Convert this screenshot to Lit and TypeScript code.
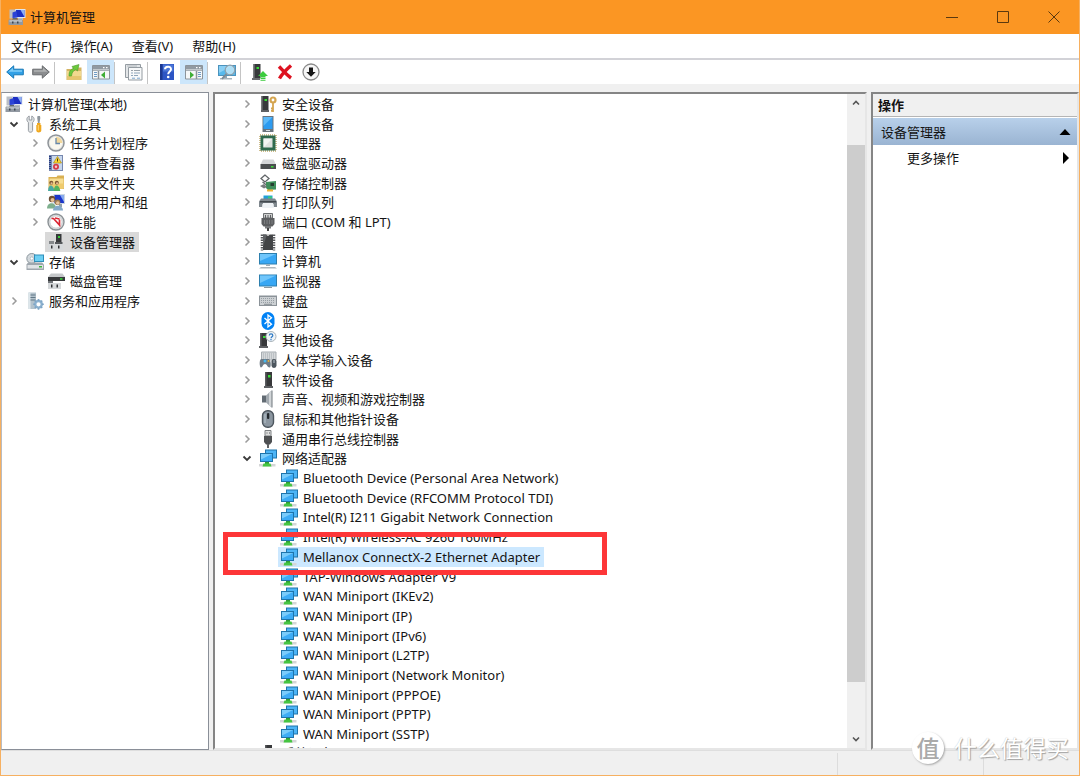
import { LitElement, html, svg, css, nothing } from "lit";
import type { SVGTemplateResult } from "lit";
import { customElement, property, state } from "lit/decorators.js";
import { classMap } from "lit/directives/class-map.js";

const pc = svg`
  <path d="M7 1h10.500v9H7z" fill="#dfe6ef"/><path d="M8 2h8.500v7H8z" fill="#1c2fc4"/><path d="M12.500 2h4v7z" fill="#8fb0f2"/>
  <path d="M1.500 1.500h6v9h-6z" fill="#b9bec6"/><path d="M4.500 4.500l4-1.500 1 6.500-5 .5z" fill="#2b43d6"/><path d="M10 10h5v2h-5z" fill="#b4bac2"/>
  <path d="M1 11.500h13l1 1v4.500H.500v-4.500z" fill="#9299a2"/><path d="M1.500 12.500h12.500v1H1.500z" fill="#d9dde2"/><path d="M4 11.500l1-1.500h4l1 1.500z" fill="#5d6670"/><path d="M4 13.500h1.500v2H4zM9 13.500h1.500v2H9z" fill="#3f4851"/>`;

const network = svg`
  <path d="M6 .5h12v9H6z" fill="#1f74ab"/><path d="M7 1.500h10v7H7z" fill="#4cb4f6"/>
  <path d="M1 4h13v9H1z" fill="#1f74ab"/><path d="M2 5h11v7H2z" fill="#3eacf6"/><path d="M2 5h11L2 10.500z" fill="#7accfb"/>
  <path d="M0 15h16.500v2.500H0z" fill="#d5d6d7"/><path d="M6 13h4v2H6z" fill="#2f9e35"/><path d="M4.500 14.500h7l1 3h-9z" fill="#45c541"/>`;

const consoleWindow = (flip: boolean) => svg`
  <path d="M.5 2.500h17v13.500H.500z" fill="#f5f7f8" stroke="#8c949b"/><path d="M1 3h16v3.500H1z" fill="#919aa2"/>
  <path d="M11 4h1.500v1.200H11zM14 4h1.500v1.200H14z" fill="#fff"/><path d="M1 7.500h16" stroke="#aab1b7"/>
  <path d=${flip ? "M11.500 8v8" : "M6.500 8v8"} stroke="#8c949b" stroke-width="1.500"/>
  <path d=${flip ? "M13 9.500h3M13 11.500h3M13 13.500h3" : "M2 9.500h3M2 11.500h3M2 13.500h3"} stroke="#6d9ac4"/>
  <path d=${flip ? "M5 8.500l4 3.500-4 3.500z" : "M13 8.500L9 12l4 3.500z"} fill="#3fae36"/>`;

const server = svg`
  <path d="M6 1h7v14H6z" fill="#38393b"/><path d="M6 1h1.500v14H6z" fill="#5b5d60"/><path d="M9 4h2.500v2.500H9z" fill="#37df36"/><path d="M5 15h9v2H5z" fill="#5f6164"/>`;

const ICONS: Record<string, SVGTemplateResult> = {
  pc,
  network,
  panelLeft: consoleWindow(false),
  panelRight: consoleWindow(true),
  server,
  back: svg`<path d="M.7 9l7-6.200v3.400h9.600v5.600H7.700v3.400z" fill="#31a0e6" stroke="#1879b7"/><path d="M2.500 8.700L7 4.800v2.400h9v1.500z" fill="#80cdf7"/>`,
  forward: svg`<path d="M17.300 9l-7-6.200v3.400H.7v5.600h9.600v3.400z" fill="#8b8d8f" stroke="#696c6e"/><path d="M15.500 8.700L11 4.800v2.400H2v1.500z" fill="#b1b3b4"/>`,
  folderUp: svg`<path d="M1.500 6H7l1.500-1.500h8V17h-15z" fill="#d3b362"/><path d="M2 8h14v8.500H2z" fill="#f1d98f"/><path d="M2 13h14v3.500H2z" fill="#e6c670"/><path d="M4 13c0-5 1.500-6.500 4.500-7.500L7 3.500 14 1.500 12.500 8l-1.800-1.500C8 8 7 9.500 6.500 13z" fill="#6bc93c" stroke="#4d9a2c" stroke-width=".6"/>`,
  props: svg`<path d="M.5 1.500h15v13H.500z" fill="#e3e6e8" stroke="#959ca2"/><path d="M3.500 4.500H17V17H3.500z" fill="#f8f9fa" stroke="#959ca2"/><path d="M2 3h10" stroke="#b3b9be"/><path d="M6 7.500h2M9 7.500h6" stroke="#9aa3ab"/><path d="M6 10h2M9 10h6M6 12.500h2M9 12.500h4" stroke="#8fa6ba"/><path d="M7 15.200h3M12 15.200h3" stroke="#7aa5cd"/>`,
  help: svg`<path d="M2 1h14v16H2z" fill="#2d55c4"/><path d="M2 1h2.500v16H2z" fill="#1c3890"/><path d="M5 1.500h10.500v7H5z" fill="#4a74d6"/><path d="M7 6.200c0-3.200 6-3.500 6 0 0 2.300-2.800 2.300-2.800 5" fill="none" stroke="#fff" stroke-width="2"/><circle cx="10.200" cy="14" r="1.300" fill="#fff"/>`,
  scan: svg`<path d="M0 2h18v11H0z" fill="#4b93bd"/><path d="M1 3h16v9H1z" fill="#56b9ec"/><path d="M1 3h13L1 10z" fill="#8ad0f5"/><path d="M5 13h4v2H5z" fill="#92a5b2"/><path d="M2 15h12v1.500H2z" fill="#a8b4bc"/><circle cx="12" cy="7" r="4.800" fill="#b9e3f7" fill-opacity=".9" stroke="#8fa0ab" stroke-width="1.200"/><path d="M8.500 10.800l-4.500 5" stroke="#7d8b95" stroke-width="1.800"/>`,
  update: svg`<path d="M3.500 1h7v14h-7z" fill="#37393b"/><path d="M3.500 1H5v14H3.500z" fill="#606264"/><path d="M6.500 4h2.500v2H6.500z" fill="#37df36"/><path d="M2 15h8v2H2z" fill="#6b6d70"/><path d="M13 8l5 5h-2.500v1.500h-5V13H8z" fill="#3ccc3f"/><path d="M10.500 15.500h5M10.500 17.300h5" stroke="#3ccc3f" stroke-width="1.100"/>`,
  remove: svg`<path d="M3 3.500c3 3 7 8 12 11.500M15 2.500C11 6 6 11 3.500 15.500" fill="none" stroke="#dd1220" stroke-width="3.400"/>`,
  disable: svg`<circle cx="9" cy="9" r="8" fill="#f6f6f6" stroke="#8a8a8a" stroke-width="1.300"/><path d="M7 4.500h4V9h2.700L9 13.700 4.300 9H7z" fill="#161616"/>`,
  tools: svg`<path d="M3.200 1v4h2.600V1C9 2.500 8.500 6 6.600 7.500V15.500c0 2.300-4.200 2.300-4.200 0V7.500C.5 6 0 2.500 3.200 1z" fill="#e2e5e7" stroke="#8c9298" stroke-width=".9"/><path d="M11.500 1h2.500l.3 2-.8 5H12l-.8-5z" fill="#8e969d"/><path d="M11 8h3.500v2h.8v5.500c0 2.500-5 2.500-5 0V10h.7z" fill="#f0a81e"/><path d="M12.300 10v5.500" stroke="#ffd77a"/>`,
  clock: svg`<circle cx="9" cy="9" r="8" fill="#e3e4e2" stroke="#8f9499" stroke-width="1.500"/><circle cx="9" cy="9" r="6.300" fill="#fbf8ee"/><path d="M9 9V2.700A6.300 6.300 0 0 1 15.300 9z" fill="#f1d79b"/><path d="M9 4v5.500h4" fill="none" stroke="#6787a9" stroke-width="1.300"/>`,
  events: svg`<path d="M2 1h14v16H2z" fill="#7687ae"/><path d="M5 2h10v14H5z" fill="#c7d7ed"/><path d="M3 2v14" stroke="#263c83" stroke-dasharray="1 1" stroke-width="2"/><path d="M10.500 2.500l4 6.500h-8z" fill="#ffd62e" stroke="#ac8b19" stroke-width=".7"/><path d="M10.500 4.500v3" stroke="#4b3d0d"/><circle cx="9" cy="12.700" r="3" fill="#d63a48"/><circle cx="9" cy="12.700" r="1.200" fill="#f4c9cd"/>`,
  share: svg`<path d="M1.500 3h8l1-1.500H17V15H1.500z" fill="#d9b052"/><path d="M2.500 4.500h14v10h-14z" fill="#f7de93"/><path d="M2.500 9.500h14v5h-14z" fill="#efcb6e"/><circle cx="4.300" cy="8.800" r="2" fill="#7b5631"/><circle cx="9.800" cy="8.800" r="2" fill="#7b5631"/><circle cx="4.600" cy="9.400" r="1.100" fill="#e3b98c"/><circle cx="10.100" cy="9.400" r="1.100" fill="#e3b98c"/><path d="M1 17c0-7.500 5.500-7.500 6.500 0z" fill="#4aa9a0"/><path d="M6.800 17c0-7.500 5.500-7.500 6.500 0z" fill="#53b45f"/>`,
  users: svg`<path d="M6.500 1H18v10H6.500z" fill="#cbd6e2"/><path d="M7.500 2H17v8H7.500z" fill="#1c37ca"/><path d="M13 2h4v7z" fill="#87a9ef"/><path d="M12 11h3v3h-3z" fill="#93a0aa"/><circle cx="5" cy="6" r="3.200" fill="#6c4d32"/><circle cx="5.500" cy="7" r="2" fill="#e5bd93"/><path d="M0 15.500c0-7 9-7 9 0z" fill="#7fb08e"/><circle cx="10.500" cy="9.300" r="2.800" fill="#9b7a4d"/><circle cx="10.800" cy="10" r="1.800" fill="#e6c39d"/><path d="M6 17.500c0-6.500 10-6.500 10 0z" fill="#84aaca"/>`,
  perf: svg`<circle cx="9" cy="9" r="8" fill="#e3e5e6" stroke="#8b9195" stroke-width="1.400"/><circle cx="9" cy="9" r="6.200" fill="#fff" stroke="#c5c9cb"/><path d="M4.500 5.500h2l6 6.500V6.500M8 5l4.500 1" fill="none" stroke="#dc2633" stroke-width="1.700"/>`,
  devmgr: svg`<path d="M9 1h5.500v8H9z" fill="#37393b"/><path d="M11 3h2v2h-2z" fill="#39cf3a"/><path d="M8 9h7.500v2H8z" fill="#55585b"/><path d="M2 8h5v3H2z" fill="#85898c"/><path d="M1 11h15v6H1z" fill="#d6d9db"/><path d="M4 12.500h1.500v3H4zM11 12.500h1.500v3H11z" fill="#303336"/>`,
  storage: svg`<circle cx="5.800" cy="5.500" r="5" fill="#d3d9dd" stroke="#8b969d"/><circle cx="5.800" cy="5.500" r="1.600" fill="#fff" stroke="#9aa4ab" stroke-width=".6"/><path d="M8 1.500h10v7.500H8z" fill="#2f8fba"/><path d="M9 2.500h8V8H9z" fill="#6ccff3"/><path d="M2 9.500h14l2 2V17H.500v-5.500z" fill="#9fa7ae"/><path d="M1.500 12h15.500v3.500H1.500z" fill="#e0e3e6"/><path d="M13 13h3v1.500h-3z" fill="#3db53b"/>`,
  diskmgr: svg`<path d="M4 1.500h11.500l2.500 3.500H1z" fill="#c4c7c9"/><path d="M1 5h17v4H1z" fill="#37393b"/><path d="M13 6.200h2.500v1.500H13z" fill="#3ddc3c"/><path d="M1 9h5v2H1z" fill="#717579"/><path d="M1 11h13v6H1z" fill="#d6d9db"/><path d="M4 12.500h1.500v3H4zM9.500 12.500H11v3H9.500z" fill="#303336"/>`,
  services: svg`<path d="M2.500 .5h7.500V17H2.500z" fill="#b3c2cc"/><path d="M2.500 .5h2V17h-2z" fill="#dde6eb"/><path d="M4.500 3H9.500M4.500 5.500H9.500M4.500 8H9.500" stroke="#637987"/><circle cx="12.500" cy="12.300" r="3.300" fill="#fff" stroke="#8db2d0" stroke-width="2.400"/><path d="M12.500 7v2M12.500 15.700v2M7.200 12.300h2M15.800 12.300h2M8.800 8.600l1.400 1.400M14.800 14.600l1.400 1.400M16.200 8.600L14.800 10M8.800 16l1.400-1.400" stroke="#7fa6c6" stroke-width="1.600"/>`,
  security: svg`<path d="M2.500 1h7v14h-7z" fill="#38393b"/><path d="M2.500 1H4v14H2.500z" fill="#5b5d60"/><path d="M5.500 4H8v2H5.500z" fill="#37df36"/><path d="M2 15h8v2H2z" fill="#5f6164"/><circle cx="14" cy="5" r="2.500" fill="none" stroke="#d4a550" stroke-width="2.200"/><path d="M14 7.500V17M14 13.500h-2M14 15.800h-2" stroke="#d4a550" stroke-width="1.800"/>`,
  portable: svg`<path d="M3.500 1h11v16h-11z" fill="#6a747d"/><path d="M4.500 2h9v12h-9z" fill="#2d9bf0"/><path d="M4.500 2h9l-9 9z" fill="#5db9f8"/><path d="M7 15.500h4" stroke="#d7dde2"/>`,
  cpu: svg`<path d="M1 1h16v16H1z" fill="none" stroke="#c0a96a" stroke-width="1.500" stroke-dasharray="1 1"/><path d="M1.500 1.500h15v15h-15z" fill="#2f6a4e"/><path d="M4.500 4.500h9v9h-9z" fill="#dfe2e0"/><path d="M4.500 4.500h9l-9 9z" fill="#f2f4f3"/>`,
  disk: svg`<path d="M4 5.500h10.500l2.500 5H1.500z" fill="#d4d6d8"/><path d="M1.500 10h15.500v5H1.500z" fill="#4b4e50"/><path d="M12 12h2.500v1.500H12z" fill="#3ddc3c"/>`,
  controller: svg`<path d="M6 1L2 4.500 6 8l4-3.500zM3.500 8l4 3" fill="none" stroke="#626669" stroke-width="1.300"/><path d="M7 8l10-1v8.500l-8 .5-2-2z" fill="#3f8f5b"/><path d="M11.500 9h3.500v3h-3.500z" fill="#263f30"/><path d="M1 12l4-2 3 3-3 1.500z" fill="#777b7d"/><path d="M8 15.500h6v2H8z" fill="#efb233"/>`,
  printer: svg`<path d="M4.500 2.500h9v4h-9z" fill="#209fd9"/><path d="M9 3.500h4v2H9z" fill="#3bd072"/><path d="M2 5.500h14l2 3v5.500h-3.500v-3h-11v3H0V8.500z" fill="#7f878d"/><path d="M1 8h16v1.500H1z" fill="#42494e"/><path d="M4 10h10l1 5H3z" fill="#eef2f5"/>`,
  port: svg`<path d="M4.500 .5h9v4.500h-9z" fill="#cfd0d0" stroke="#6d7072"/><path d="M6.500 2v3M9 2v3M11.500 2v3" stroke="#5d6062"/><path d="M2.500 5h13v6l-2 2.500h-9l-2-2.500z" fill="#5c5e60"/><path d="M6 13h6v2.500H6z" fill="#77797b"/><path d="M8 15h2v3H8z" fill="#444"/><path d="M5.500 7v4M8 7v4M10.500 7v4M13 7v4" stroke="#7d7f81"/>`,
  firmware: svg`<path d="M4 1.500h10v15.500H4z" fill="#424446"/><path d="M3 1.500v16M15 1.500v16" stroke="#57595c" stroke-width="2.500" stroke-dasharray="1.500 1"/><path d="M4 1.500l4 0-4 12z" fill="#5f6265"/><path d="M7 1.500h4L9 3z" fill="#fff"/>`,
  computer: svg`<path d="M0 1h18v11.500H0z" fill="#2d7fae"/><path d="M1 2h16v9.500H1z" fill="#38a7f4"/><path d="M1 2h16L1 9z" fill="#70c6fb"/><path d="M7 12.500h4V14H7z" fill="#9cabb5"/><path d="M2 15h14l2 1.500H0z" fill="#aeb7bd"/>`,
  monitor: svg`<path d="M0 2.500h18v12H0z" fill="#2d7fae"/><path d="M1 3.500h16v10H1z" fill="#38a7f4"/><path d="M1 3.500h16L1 11z" fill="#70c6fb"/><path d="M5 15h8v1H5z" fill="#8c989f"/>`,
  keyboard: svg`<path d="M0 3.500h18v10.500H0z" fill="#8b9298"/><path d="M1 5h16v8H1z" fill="#ccd0d3"/><path d="M2 6.500h14M2 8.500h14M2 10.500h14" stroke="#979fa5" stroke-dasharray="1 1"/><path d="M5 12.300h8" stroke="#858d93"/>`,
  bluetooth: svg`<rect x="2.500" y="0" width="13" height="18" rx="6.500" fill="#0082f5"/><path d="M5.500 6l7 6.300L9 15V3l3.500 2.700-7 6.300" fill="none" stroke="#fff" stroke-width="1.300"/>`,
  unknown: svg`<path d="M1 2h7v13H1z" fill="#38393b"/><path d="M1 2h1.500v13H1z" fill="#5b5d60"/><path d="M4 5h2.500v2H4z" fill="#37df36"/><path d="M0 15h9v2H0z" fill="#5f6164"/><circle cx="12" cy="5.500" r="5" fill="#eff4f7" stroke="#a9b3ba"/><path d="M10.300 4.500c0-2.200 3.500-2.200 3.500 0 0 1.400-1.700 1.300-1.700 2.700M12 8v1.200" fill="none" stroke="#2c78c5" stroke-width="1.200"/>`,
  hid: svg`<path d="M2.500 1H17v8H2.500z" fill="#d5d8da" stroke="#a7adb2"/><path d="M4 3h12M4 5h12M4 7h12" stroke="#a3aab0" stroke-dasharray="1 1"/><path d="M2 8h8c2 1 2.500 8.500.5 8.500S8 13 6 13s-2.500 3.500-4 3.500S0 9 2 8z" fill="#6d7a85"/><circle cx="6" cy="10" r="1.500" fill="#45b7ee"/><circle cx="9.500" cy="10" r="1" fill="#e2b33f"/><rect x="12.500" y="8" width="5" height="9" rx="2.400" fill="#4d565e"/><path d="M15 9v3" stroke="#b9c3cb"/>`,
  sound: svg`<path d="M3 5.500h4v7H3z" fill="#626b73"/><path d="M7 5.500L12.500.5v17L7 12.500z" fill="#a3aab0"/><path d="M10 2.800L12.500.5v17L10 15.200z" fill="#d1d5d8"/><path d="M13 .5v17" stroke="#6e767d"/>`,
  mouse: svg`<rect x="3.500" y=".7" width="11" height="16.600" rx="5" fill="#8b96a0" stroke="#4d565e" stroke-width="1.400"/><path d="M6 4v9" stroke="#a9b4be" stroke-width="1.500"/><rect x="8" y="3" width="2.300" height="6" rx="1" fill="#23292e"/>`,
  usb: svg`<path d="M6 .5h6V6H6z" fill="#dcdddd" stroke="#7d8082"/><path d="M7.500 3h1M10 3h1" stroke="#55585a"/><path d="M5 6h8v6l-2 2.500H7L5 12z" fill="#4e5052"/><path d="M8 14h2v4H8z" fill="#606264"/>`,
};

interface Node {
  icon: string;
  label: string;
  level: number;
  open?: boolean;
  selected?: boolean;
  marked?: boolean;
}

const n = (icon: string, label: string, level: number, open?: boolean, extra: Partial<Node> = {}): Node => ({ icon, label, level, open, ...extra });

const CONSOLE: Node[] = [
  n("pc", "计算机管理(本地)", 0),
  n("tools", "系统工具", 1, true),
  n("clock", "任务计划程序", 2, false),
  n("events", "事件查看器", 2, false),
  n("share", "共享文件夹", 2, false),
  n("users", "本地用户和组", 2, false),
  n("perf", "性能", 2, false),
  n("devmgr", "设备管理器", 2, undefined, { selected: true }),
  n("storage", "存储", 1, true),
  n("diskmgr", "磁盘管理", 2),
  n("services", "服务和应用程序", 1, false),
];

const CLASSES: [string, string][] = [
  ["security", "安全设备"], ["portable", "便携设备"], ["cpu", "处理器"], ["disk", "磁盘驱动器"],
  ["controller", "存储控制器"], ["printer", "打印队列"], ["port", "端口 (COM 和 LPT)"], ["firmware", "固件"],
  ["computer", "计算机"], ["monitor", "监视器"], ["keyboard", "键盘"], ["bluetooth", "蓝牙"],
  ["unknown", "其他设备"], ["hid", "人体学输入设备"], ["server", "软件设备"], ["sound", "声音、视频和游戏控制器"],
  ["mouse", "鼠标和其他指针设备"], ["usb", "通用串行总线控制器"],
];

const ADAPTERS = [
  "Bluetooth Device (Personal Area Network)", "Bluetooth Device (RFCOMM Protocol TDI)",
  "Intel(R) I211 Gigabit Network Connection", "Intel(R) Wireless-AC 9260 160MHz",
  "Mellanox ConnectX-2 Ethernet Adapter", "TAP-Windows Adapter V9", "WAN Miniport (IKEv2)",
  "WAN Miniport (IP)", "WAN Miniport (IPv6)", "WAN Miniport (L2TP)", "WAN Miniport (Network Monitor)",
  "WAN Miniport (PPPOE)", "WAN Miniport (PPTP)", "WAN Miniport (SSTP)",
];

const DEVICES: Node[] = [
  ...CLASSES.map(([icon, label]) => n(icon, label, 2, false)),
  n("network", "网络适配器", 2, true),
  ...ADAPTERS.map((label) =>
    n("network", label, 3, undefined, label.startsWith("Mellanox") ? { selected: true, marked: true } : {})),
];

const icon = (name: string) => html`<svg class="icon" viewBox="0 0 18 18" aria-hidden="true">${ICONS[name]}</svg>`;

const base = css`
  * { box-sizing: border-box; }
  button { font: inherit; color: inherit; background: none; border: 0; padding: 0; margin: 0; }
  svg { display: block; flex: none; }
  .icon { width: 18px; height: 18px; }
`;

@customElement("mmc-tree")
export class MmcTree extends LitElement {
  @property({ attribute: false }) nodes: Node[] = [];
  @property() name = "";
  @property({ type: Boolean }) active = false;

  static styles = [base, css`
    :host { display: block; min-width: 0; }
    .tree { display: grid; grid-auto-rows: minmax(0, 1fr); height: 100%; margin: 0; padding: 0; list-style: none; }
    .row { display: flex; position: relative; min-width: 0; white-space: nowrap; }
    .level0, .level1 { padding-left: 1px; }
    .level2 { padding-left: 22px; }
    .level3 { padding-left: 43px; }
    :host([active]) .level2 { padding-left: 21px; }
    :host([active]) .level3 { padding-left: 42px; }
    .twisty { width: 21px; flex: none; display: flex; align-items: center; justify-content: center; }
    .twisty svg { width: 10px; height: 10px; fill: none; stroke: #9b9b9b; stroke-width: 1.5; }
    .twisty.open svg { stroke: #3a3a3a; stroke-width: 1.8; }
    .item { display: flex; align-items: center; gap: 5px; padding: 0 4px 0 2px; }
    .selected { background: #d9d9d9; }
    :host([active]) .selected { background: #cce8ff; }
    .mark { position: absolute; z-index: 1; left: 8px; top: -15px; width: 384px; height: 43px; border: 5px solid #fd3638; pointer-events: none; }
  `];

  private row(node: Node) {
    const shape = node.open ? "M1.500 3.500L5 7l3.500-3.500" : "M3.500 1.500L7 5 3.500 8.500";
    return html`
      <li class="row level${node.level}" role="treeitem" aria-selected=${node.selected ? "true" : "false"}>
        ${node.level === 0 ? nothing : node.open === undefined
          ? html`<span class="twisty"></span>`
          : html`<button class=${classMap({ twisty: true, open: node.open })} aria-label=${node.label}>
              <svg viewBox="0 0 10 10"><path d=${shape} /></svg>
            </button>`}
        <span class=${classMap({ item: true, selected: !!node.selected })}>${icon(node.icon)}<span>${node.label}</span></span>
        ${node.marked ? html`<span class="mark"></span>` : nothing}
      </li>`;
  }

  render() {
    return html`<ul class="tree" role="tree" aria-label=${this.name}>${this.nodes.map((x) => this.row(x))}</ul>`;
  }
}

@customElement("app-root")
export class AppRoot extends LitElement {
  @state() private tools: { icon: string; label: string; on?: boolean }[][] = [
    [{ icon: "back", label: "后退" }, { icon: "forward", label: "前进" }],
    [{ icon: "folderUp", label: "上移一级" }, { icon: "panelLeft", label: "显示控制台树", on: true }],
    [{ icon: "props", label: "属性" }],
    [{ icon: "help", label: "帮助" }, { icon: "panelRight", label: "显示操作窗格", on: true }],
    [{ icon: "scan", label: "扫描硬件改动" }],
    [{ icon: "update", label: "更新驱动程序" }, { icon: "remove", label: "卸载设备" }, { icon: "disable", label: "禁用设备" }],
  ];

  static styles = [base, css`
    :host { display: block; height: 100vh; color: #141414; font: 13px/18px "Noto Sans", "Noto Sans CJK SC", sans-serif; }
    .window { height: 100%; display: flex; flex-direction: column; border: 1px solid #f6b061; border-top: 0; background: #f0f0f0; position: relative; overflow: hidden; }
    .title { height: 34px; margin: 0 -1px; flex: none; display: flex; align-items: center; background: #fb9623; padding: 0 1px 0 8px; gap: 4px; }
    .title h1 { flex: 1; margin: 0; font-size: 13px; font-weight: 400; }
    .caption { display: flex; height: 100%; }
    .caption button { width: 51px; display: grid; place-items: center; }
    .caption svg { width: 12px; height: 12px; fill: none; stroke: #5b390f; }
    .menu { height: 26px; flex: none; display: flex; background: #fff; border-bottom: 2px solid #d2d2d7; padding-left: 1px; gap: 1px; }
    .menu button { padding: 0 9px; }
    .tools { height: 24px; flex: none; display: flex; background: #fff; padding-left: 1px; }
    .group { display: flex; }
    .group + .group::before { content: ""; width: 1px; margin: 2px 5px 0 0; background: #c4c4c4; }
    .tool { width: 27px; display: grid; place-items: center; }
    .group:first-child .tool, .group:last-child .tool { width: 26px; }
    .tool.on { background: #cce6fb; }
    .panes { flex: 1; min-height: 0; display: grid; grid-template-columns: 208px minmax(0, 1fr) 208px; gap: 4px; padding-top: 8px; }
    .pane { background: #fff; min-height: 0; overflow: hidden; }
    .nav { border: 1px solid #8a8f98; border-left-color: #b9bcc2; padding-top: 1px; }
    .nav mmc-tree { height: 217px; }
    .sunken { border: 2px solid #e6e6e6; border-top-color: #858585; border-left-color: #858585; }
    .devices { display: flex; }
    .list { flex: 1; min-width: 0; display: flex; flex-direction: column; }
    .list mmc-tree { flex: 1; min-height: 0; }
    .cut { height: 4px; flex: none; overflow: hidden; padding-left: 44px; display: flex; gap: 5px; }
    .scroll { width: 18px; flex: none; display: flex; flex-direction: column; background: #f0f0f0; }
    .scroll button { height: 18px; flex: none; display: grid; place-items: center; }
    .scroll svg { width: 10px; height: 10px; fill: none; stroke: #555; stroke-width: 1.6; }
    .thumb { flex: 1; margin: 33px 0 48px; background: #cdcdcd; }
    .actions { display: flex; flex-direction: column; }
    .actions h2 { margin: 0; height: 23px; padding-left: 5px; font-size: 13px; line-height: 23px; font-weight: 700; background: #f0f0f0; border-bottom: 1px solid #b5b5b5; }
    .section { margin-top: 1px; height: 27px; flex: none; display: flex; align-items: center; justify-content: space-between; padding: 0 6px 0 8px; background: linear-gradient(#b8d0ea, #9ab4d2); }
    .more { height: 26px; flex: none; display: flex; align-items: center; justify-content: space-between; padding: 0 6px 0 34px; }
    .actions svg { width: 12px; height: 12px; }
    .status { height: 25px; flex: none; display: flex; justify-content: flex-end; border-top: 1px solid #dedede; }
    .status span { border-left: 1px solid #dcdcdc; margin-top: 2px; }
    .status .a { width: 146px; }
    .status .b { width: 96px; }
    .brand { position: absolute; right: 10px; bottom: 11px; display: flex; align-items: center; gap: 10px; color: #fff; font-size: 23px; line-height: 32px; text-shadow: 1px 1px 1px #a2a2a2, 0 0 1px #bbb; }
    .seal { width: 32px; height: 32px; border-radius: 50%; background: #fff; color: #aaa; text-align: center; box-shadow: 1px 1px 2px #aaa; text-shadow: none; font-weight: 500; }
  `];

  render() {
    return html`
      <div class="window">
        <header class="title">
          ${icon("pc")}
          <h1>计算机管理</h1>
          <div class="caption">
            <button aria-label="最小化"><svg viewBox="0 0 12 12"><path d="M0 6.500h12" /></svg></button>
            <button aria-label="最大化"><svg viewBox="0 0 12 12"><path d="M.5 .5h11v11H.5z" /></svg></button>
            <button aria-label="关闭"><svg viewBox="0 0 12 12"><path d="M.5 .5l11 11m0-11l-11 11" /></svg></button>
          </div>
        </header>
        <nav class="menu">
          ${["文件(F)", "操作(A)", "查看(V)", "帮助(H)"].map((m) => html`<button>${m}</button>`)}
        </nav>
        <div class="tools" role="toolbar">
          ${this.tools.map((g) => html`<div class="group">${g.map((t) => html`
            <button class=${classMap({ tool: true, on: !!t.on })} aria-label=${t.label}>${icon(t.icon)}</button>`)}</div>`)}
        </div>
        <main class="panes">
          <section class="pane nav"><mmc-tree name="控制台树" .nodes=${CONSOLE}></mmc-tree></section>
          <section class="pane sunken devices">
            <div class="list">
              <mmc-tree active name="设备" .nodes=${DEVICES}></mmc-tree>
              <div class="cut">${icon("server")}<span>系统设备</span></div>
            </div>
            <div class="scroll">
              <button aria-label="向上"><svg viewBox="0 0 10 10"><path d="M2 6.500l3-3 3 3" /></svg></button>
              <div class="thumb"></div>
              <button aria-label="向下"><svg viewBox="0 0 10 10"><path d="M2 3.500l3 3 3-3" /></svg></button>
            </div>
          </section>
          <aside class="pane sunken actions">
            <h2>操作</h2>
            <button class="section">设备管理器<svg viewBox="0 0 12 12"><path d="M6 3l5.500 6H.5z" /></svg></button>
            <button class="more">更多操作<svg viewBox="0 0 12 12"><path d="M4 0l6 6-6 6z" /></svg></button>
          </aside>
        </main>
        <footer class="status"><span class="a"></span><span class="b"></span></footer>
        <div class="brand"><span class="seal">值</span><span>什么值得买</span></div>
      </div>`;
  }
}
